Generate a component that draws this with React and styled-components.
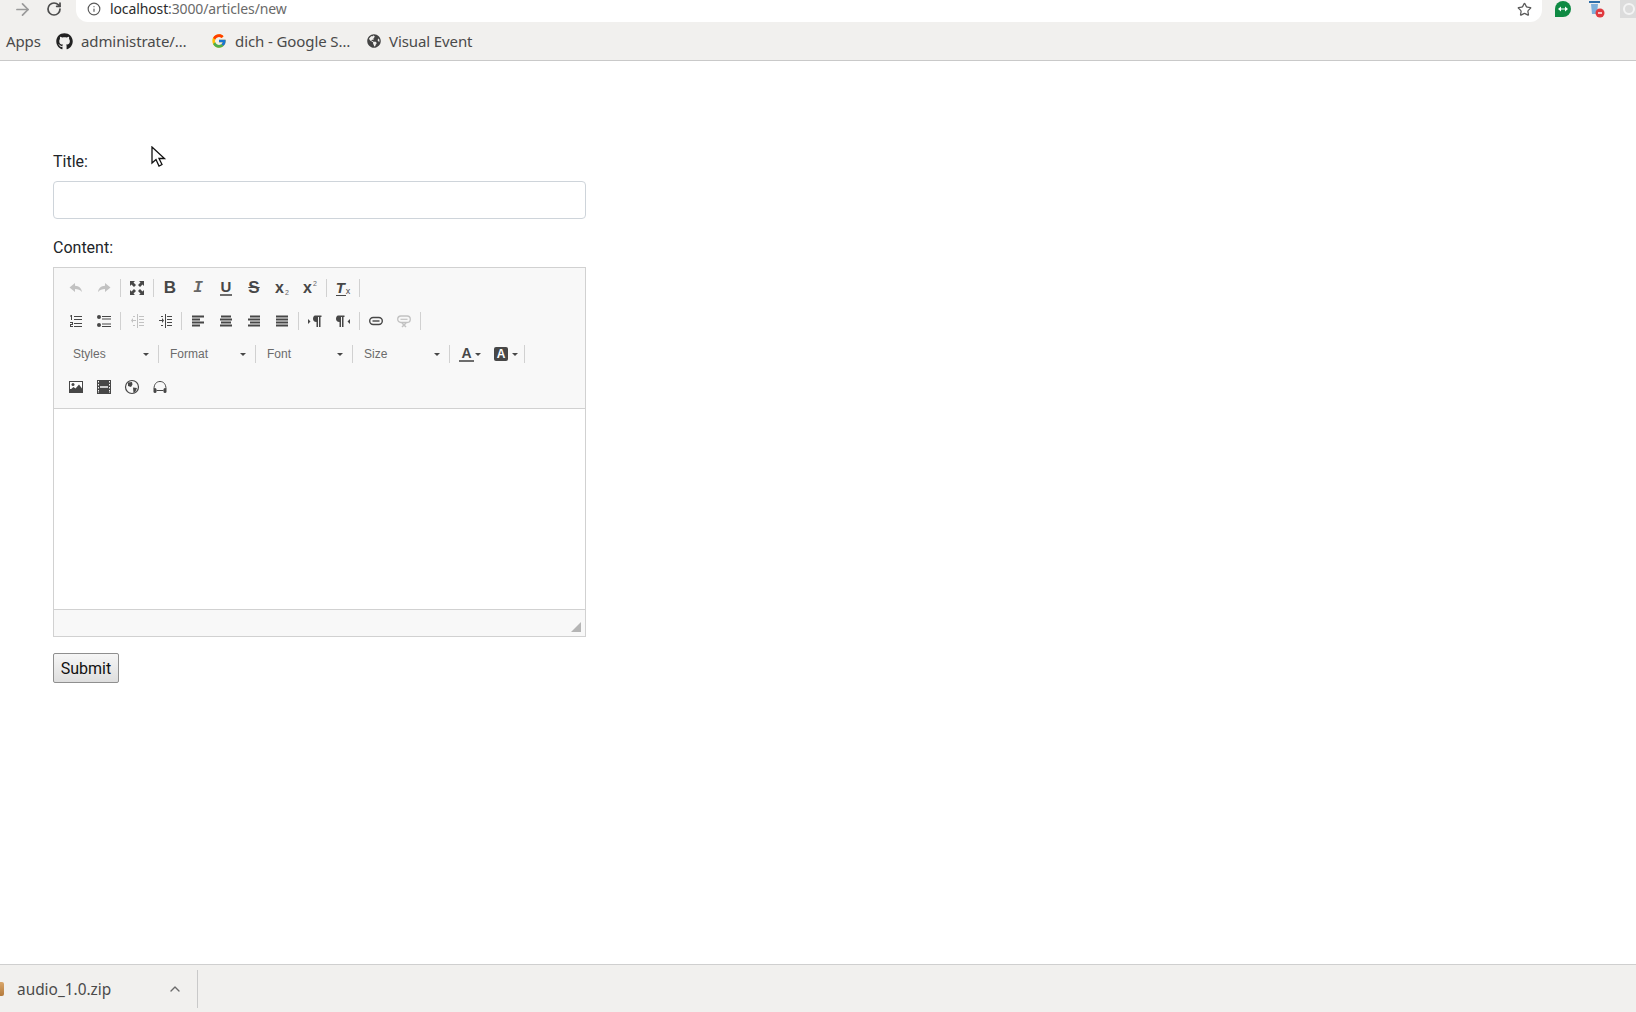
import React from 'react';
import styled, { createGlobalStyle } from 'styled-components';
import { FaGithub, FaGlobeAmericas } from 'react-icons/fa';
import { FcGoogle } from 'react-icons/fc';
import { ArrowRight, RotateCw, Info, Star, ChevronUp } from 'lucide-react';

const GlobalStyle = createGlobalStyle`
  html, body {
    margin: 0;
    padding: 0;
    background: #ffffff;
    overflow: hidden;
  }
  * {
    box-sizing: border-box;
  }
`;

const Page = styled.div`
  position: relative;
  width: 1636px;
  height: 1012px;
  display: flex;
  flex-direction: column;
  font-family: Roboto, sans-serif;
  color: #212529;
  overflow: hidden;
`;

const ChromeBar = styled.header`
  height: 61px;
  flex: none;
  background: #f1f0ee;
  border-bottom: 1px solid #c9c9c9;
  font-family: 'Noto Sans', sans-serif;
`;

const NavRow = styled.div`
  height: 22px;
  display: flex;
  align-items: flex-start;
`;

const NavIcon = styled.div`
  width: ${p => p.$w}px;
  height: 18px;
  flex: none;
  display: flex;
  align-items: center;
  justify-content: center;
  color: ${p => p.$color};
`;

const BackIcon = styled(NavIcon)`
  padding-left: 6px;
`;

const AddressBar = styled.div`
  width: 1466px;
  height: 22px;
  margin-left: 6px;
  flex: none;
  background: #ffffff;
  border-radius: 0 0 12px 12px;
  display: flex;
  align-items: flex-start;
  padding: 0 10px 0 10px;
`;

const Url = styled.div`
  flex: 1;
  margin-left: 8px;
  font-size: 14px;
  line-height: 18px;
  color: #6a6a6a;
  letter-spacing: -0.12px;

  b {
    font-weight: 400;
    color: #2b2b2b;
  }
`;

const Extensions = styled.div`
  display: flex;
  align-items: flex-start;
  padding-left: 12px;
  gap: 15px;
`;

const BookmarkRow = styled.div`
  height: 38px;
  display: flex;
  align-items: center;
  padding: 0 0 0 6px;
  font-size: 15px;
  color: #4a4a4a;
`;

const Bookmark = styled.div`
  width: ${p => p.$w}px;
  flex: none;
  display: flex;
  align-items: center;
  gap: 8px;
  white-space: nowrap;
  letter-spacing: -0.1px;
`;

const Main = styled.main`
  flex: 1;
  padding: 88px 0 0 53px;
`;

const Form = styled.form`
  width: 533px;
`;

const FormGroup = styled.div`
  margin-bottom: 16px;
`;

const Label = styled.label`
  display: block;
  font-size: 16px;
  line-height: 24px;
  padding-top: 1px;
  margin-bottom: 7px;
`;

const TextInput = styled.input`
  display: block;
  width: 100%;
  height: 38px;
  border: 1px solid #ced4da;
  border-radius: 4px;
  background: #ffffff;
  outline: none;
`;

const Editor = styled.div`
  height: 370px;
  border: 1px solid #d1d1d1;
  display: flex;
  flex-direction: column;
`;

const Toolbar = styled.div`
  height: 141px;
  flex: none;
  background: #f8f8f8;
  border-bottom: 1px solid #d1d1d1;
  padding: 6px 0 0 8px;
`;

const ToolRow = styled.div`
  height: 28px;
  margin-bottom: 5px;
  display: flex;
  align-items: center;
`;

const ToolButton = styled.div`
  width: 28px;
  height: 28px;
  flex: none;
  display: flex;
  align-items: center;
  justify-content: center;
  color: ${p => (p.$off ? '#c2c2c2' : '#474747')};
`;

const Sep = styled.span`
  width: 1px;
  height: 18px;
  flex: none;
  margin: 0 2px;
  background: #d1d1d1;
`;

const Combo = styled.div`
  width: 94px;
  height: 28px;
  flex: none;
  padding: 0 7px 0 11px;
  display: flex;
  align-items: center;
  justify-content: space-between;
  font-family: 'Liberation Sans', sans-serif;
  font-size: 12px;
  color: #6b6b6b;
`;

const ComboSep = styled(Sep)`
  margin: 0 0 0 2px;
`;

const Caret = styled.i`
  display: block;
  width: 0;
  height: 0;
  border-left: 3px solid transparent;
  border-right: 3px solid transparent;
  border-top: 3px solid #474747;
`;

const ColorButton = styled.div`
  width: ${p => p.$w}px;
  height: 28px;
  flex: none;
  padding-left: ${p => p.$pad}px;
  display: flex;
  align-items: center;
  gap: ${p => p.$gap}px;
`;

const Letter = styled.span`
  display: flex;
  align-items: flex-end;
  font-family: ${p => (p.$mono ? "'Liberation Mono'" : "'Liberation Sans'")}, sans-serif;
  font-size: ${p => p.$size || 16}px;
  line-height: 16px;
  font-weight: 700;
  font-style: ${p => (p.$italic ? 'italic' : 'normal')};
  color: ${p => (p.$mono ? '#666666' : '#474747')};
  text-decoration: ${p => p.$line || 'none'};

  small {
    font-size: 7px;
    line-height: 7px;
    font-weight: 400;
    color: #666666;
    margin-left: 1px;
    align-self: ${p => (p.$up ? 'flex-start' : 'flex-end')};
  }
`;

const UnderLetter = styled(Letter)`
  border-bottom: 2px solid #6d6d6d;
  line-height: 14px;
  height: 16px;
  width: ${p => p.$w || 12}px;
  justify-content: center;
`;

const ClearFormat = styled.span`
  display: flex;
  align-items: flex-end;
  font-family: 'Liberation Sans', sans-serif;
  font-weight: 700;
  color: #474747;

  u {
    display: block;
    height: 15px;
    width: 10px;
    font-size: 15px;
    font-style: italic;
    line-height: 13px;
    text-decoration: none;
    border-bottom: 1.5px solid #474747;
  }

  small {
    font-size: 9px;
    line-height: 9px;
    font-weight: 400;
  }
`;

const InverseLetter = styled(Letter)`
  width: 14px;
  height: 14px;
  border-radius: 2px;
  align-items: center;
  justify-content: center;
  background: #474747;
  color: #ffffff;
  font-size: 12px;
`;

const Body = styled.div`
  flex: 1;
  background: #ffffff;
`;

const StatusBar = styled.div`
  height: 27px;
  flex: none;
  background: #f8f8f8;
  border-top: 1px solid #d1d1d1;
  display: flex;
  justify-content: flex-end;
  align-items: flex-end;
  padding: 0 4px 4px 0;
`;

const Submit = styled.button`
  display: block;
  width: 66px;
  height: 30px;
  padding: 0;
  font-family: inherit;
  font-size: 16px;
  color: #111111;
  background: linear-gradient(#f6f6f6, #dedede);
  border: 1px solid #8f8f8f;
  border-radius: 2px;
`;

const DownloadBar = styled.footer`
  height: 48px;
  flex: none;
  background: #f1f0ee;
  border-top: 1px solid #cfcfcf;
  display: flex;
  align-items: center;
  font-family: 'Noto Sans', sans-serif;
`;

const FileIcon = styled.span`
  width: 4px;
  height: 14px;
  flex: none;
  background: linear-gradient(#d9a66a, #b47a3c);
  border-radius: 0 2px 2px 0;
`;

const FileName = styled.span`
  width: 150px;
  flex: none;
  margin-left: 13px;
  padding-top: 2px;
  font-size: 15.4px;
  color: #4a4a4a;
`;

const DownloadSep = styled.span`
  width: 1px;
  height: 38px;
  margin-left: 14px;
  background: #c9c9c9;
`;

const Cursor = styled.svg`
  position: absolute;
  left: 151px;
  top: 146px;
`;

const Glyph = ({ children }) => (
  <svg width="16" height="16" viewBox="0 0 16 16" fill="currentColor">
    {children}
  </svg>
);

const Bars = ({ rows }) => (
  <Glyph>
    {rows.map(([x, w], i) => (
      <rect key={i} x={x} y={2.5 + i * 3} width={w} height="2" />
    ))}
  </Glyph>
);

const IconUndo = () => (
  <Glyph>
    <path d="M7 3 1.500 7.500 7 12V9c3 0 5 .8 7 3-.4-3.600-3-6-7-6.200z" />
  </Glyph>
);

const IconRedo = () => (
  <Glyph>
    <path d="M9 3l5.500 4.500L9 12V9c-3 0-5 .8-7 3 .4-3.600 3-6 7-6.200z" />
  </Glyph>
);

const IconMaximize = () => (
  <Glyph>
    <path d="M1 1h5L4.500 2.500 7 5 5 7 2.500 4.500 1 6zM15 1v5l-1.500-1.500L11 7 9 5l2.500-2.500L10 1zM1 15v-5l1.500 1.500L5 9l2 2-2.500 2.500L6 15zM15 15h-5l1.500-1.500L9 11l2-2 2.500 2.500L15 10z" />
  </Glyph>
);

const IconOrdered = () => (
  <Glyph>
    <rect x="6" y="3" width="8" height="1" />
    <rect x="6" y="6" width="8" height="1" />
    <rect x="6" y="10" width="8" height="1" />
    <rect x="6" y="13" width="8" height="1" />
    <path d="M3 2h1v5H3V3.500H2V3zM2 9h3v3H3v1h2v1H2v-3h2v-1H2z" />
  </Glyph>
);

const IconBulleted = () => (
  <Glyph>
    <circle cx="3" cy="4" r="2" />
    <circle cx="3" cy="12" r="2" />
    <rect x="6" y="3" width="9" height="1" />
    <rect x="6" y="5.500" width="9" height="1" />
    <rect x="6" y="10.500" width="9" height="1" />
    <rect x="6" y="13" width="9" height="1" />
  </Glyph>
);

const IconIndent = () => (
  <Glyph>
    <rect x="8" y="1" width="1" height="14" />
    <rect x="10" y="3" width="5" height="1" />
    <rect x="10" y="6" width="5" height="1" />
    <rect x="10" y="9" width="5" height="1" />
    <rect x="10" y="12" width="5" height="1" />
    <path d="M2 7h3V5l2 2.500L5 10V8H2z" />
    <rect x="4" y="3" width="2" height="1" />
    <rect x="4" y="12" width="2" height="1" />
  </Glyph>
);

const IconOutdent = () => (
  <Glyph>
    <rect x="8" y="1" width="1" height="14" />
    <rect x="10" y="3" width="5" height="1" />
    <rect x="10" y="6" width="5" height="1" />
    <rect x="10" y="9" width="5" height="1" />
    <rect x="10" y="12" width="5" height="1" />
    <path d="M7 7H4V5L2 7.500 4 10V8h3z" />
    <rect x="4" y="3" width="2" height="1" />
    <rect x="4" y="12" width="2" height="1" />
  </Glyph>
);

const IconPilcrowLtr = () => (
  <Glyph>
    <path d="M1 6l2.500 2.500L1 11z" />
    <path d="M8 2.500h6.500V4h-1v10H12V4h-1v10H9.500V9C7 9 6 7.500 6 5.800S7 2.500 8 2.500z" />
  </Glyph>
);

const IconPilcrowRtl = () => (
  <Glyph>
    <path d="M15 6l-2.500 2.500L15 11z" />
    <path d="M3 2.500h6.500V4h-1v10H7V4H6v10H4.500V9C2 9 1 7.500 1 5.800S2 2.500 3 2.500z" />
  </Glyph>
);

const IconLink = () => (
  <Glyph>
    <rect x="1.700" y="4.500" width="12.600" height="7" rx="3.500" fill="none" stroke="currentColor" strokeWidth="1.400" />
    <rect x="4.500" y="7.300" width="7" height="1.400" />
  </Glyph>
);

const IconUnlink = () => (
  <Glyph>
    <rect x="1.700" y="3" width="12.600" height="6.500" rx="3.200" fill="none" stroke="currentColor" strokeWidth="1.300" />
    <rect x="4.500" y="5.700" width="7" height="1.200" />
    <path d="M6 10l4 4m0-4l-4 4" fill="none" stroke="currentColor" strokeWidth="1.500" />
  </Glyph>
);

const IconImage = () => (
  <Glyph>
    <rect x="1" y="2" width="14" height="12" />
    <rect x="2" y="3" width="12" height="7" fill="#ffffff" />
    <circle cx="5" cy="5.500" r="1.500" />
    <path d="M2 11l3.500-3 2 1.500L11 5.500l3 4V11z" />
  </Glyph>
);

const IconFlash = () => (
  <Glyph>
    <path d="M1 1h14v14H1zM2 2v1.500h1V2zm0 3v1.500h1V5zm0 3v1.500h1V8zm0 3v1.500h1V11zm0 2.500V14h1v-.5zM13 2v1.500h1V2zm0 3v1.500h1V5zm0 3v1.500h1V8zm0 3v1.500h1V11zm0 2.500V14h1v-.5zM4 7.300v1.400h8V7.300z" fillRule="evenodd" />
  </Glyph>
);

const IconFrame = () => (
  <Glyph>
    <circle cx="8" cy="8" r="6.500" fill="none" stroke="currentColor" strokeWidth="1.200" />
    <path d="M4 3.500l4-.5 .5 2.500L7 8 4 7zM9 8.500l4 .5-1.500 3.500L9.500 14z" />
  </Glyph>
);

const IconAudio = () => (
  <Glyph>
    <path d="M2 10C2 5 4.500 2.500 8 2.500S14 5 14 10" fill="none" stroke="currentColor" />
    <rect x="1.500" y="9" width="3" height="5" rx="1.500" />
    <rect x="11.500" y="9" width="3" height="5" rx="1.500" />
    <rect x="4.500" y="11" width="7" height="1" />
  </Glyph>
);

function ExtensionIcons() {
  return (
    <Extensions>
      <svg width="18" height="18" viewBox="0 0 18 18">
        <path d="M9 1a8 8 0 1 1 0 16H1V9a8 8 0 0 1 8-8z" fill="#0f8a43" />
        <path d="M4 9l3-2.500v2h4v-2L14 9l-3 2.500v-2H7v2z" fill="#ffffff" />
      </svg>
      <svg width="18" height="18" viewBox="0 0 18 18">
        <rect x="2" y="1" width="11" height="2" fill="#2d6ea8" />
        <path d="M4 4h7l-1 10H5z" fill="#7fb0da" />
        <circle cx="13" cy="13" r="4.500" fill="#e0393e" />
        <rect x="11" y="12.300" width="4" height="1.400" fill="#ffffff" />
      </svg>
      <svg width="18" height="18" viewBox="0 0 18 18">
        <rect width="18" height="18" fill="#dcdcdc" />
        <circle cx="9" cy="9" r="5" fill="none" stroke="#f4f4f4" strokeWidth="2" />
      </svg>
    </Extensions>
  );
}

function Chrome() {
  return (
    <ChromeBar>
      <NavRow>
        <BackIcon $w={38} $color="#9a9a9a">
          <ArrowRight size={19} strokeWidth={2.2} />
        </BackIcon>
        <NavIcon $w={32} $color="#4c4c4c">
          <RotateCw size={16} strokeWidth={2.6} />
        </NavIcon>
        <AddressBar>
          <NavIcon $w={16} $color="#5a5a5a">
            <Info size={14} />
          </NavIcon>
          <Url>
            <b>localhost</b>:3000/articles/new
          </Url>
          <NavIcon $w={16} $color="#5a5a5a">
            <Star size={15} />
          </NavIcon>
        </AddressBar>
        <ExtensionIcons />
      </NavRow>
      <BookmarkRow>
        <Bookmark $w={50}>Apps</Bookmark>
        <Bookmark $w={155}>
          <FaGithub size={17} color="#222222" />
          administrate/…
        </Bookmark>
        <Bookmark $w={156}>
          <FcGoogle size={16} />
          dich - Google S…
        </Bookmark>
        <Bookmark $w={120}>
          <FaGlobeAmericas size={14} color="#444444" />
          Visual Event
        </Bookmark>
      </BookmarkRow>
    </ChromeBar>
  );
}

function EditorToolbar() {
  return (
    <Toolbar>
      <ToolRow>
        <ToolButton $off><IconUndo /></ToolButton>
        <ToolButton $off><IconRedo /></ToolButton>
        <Sep />
        <ToolButton><IconMaximize /></ToolButton>
        <Sep />
        <ToolButton><Letter $size={17}>B</Letter></ToolButton>
        <ToolButton><Letter $mono $italic $size={16}>I</Letter></ToolButton>
        <ToolButton><UnderLetter $size={15}>U</UnderLetter></ToolButton>
        <ToolButton><Letter $size={17} $line="line-through">S</Letter></ToolButton>
        <ToolButton><Letter>x<small>2</small></Letter></ToolButton>
        <ToolButton><Letter $up>x<small>2</small></Letter></ToolButton>
        <Sep />
        <ToolButton><ClearFormat><u>T</u><small>x</small></ClearFormat></ToolButton>
        <Sep />
      </ToolRow>
      <ToolRow>
        <ToolButton><IconOrdered /></ToolButton>
        <ToolButton><IconBulleted /></ToolButton>
        <Sep />
        <ToolButton $off><IconOutdent /></ToolButton>
        <ToolButton><IconIndent /></ToolButton>
        <Sep />
        <ToolButton><Bars rows={[[2, 12], [2, 8], [2, 12], [2, 8]]} /></ToolButton>
        <ToolButton><Bars rows={[[3, 10], [2, 12], [3, 10], [2, 12]]} /></ToolButton>
        <ToolButton><Bars rows={[[4, 10], [2, 12], [4, 10], [2, 12]]} /></ToolButton>
        <ToolButton><Bars rows={[[2, 12], [2, 12], [2, 12], [2, 12]]} /></ToolButton>
        <Sep />
        <ToolButton><IconPilcrowLtr /></ToolButton>
        <ToolButton><IconPilcrowRtl /></ToolButton>
        <Sep />
        <ToolButton><IconLink /></ToolButton>
        <ToolButton $off><IconUnlink /></ToolButton>
        <Sep />
      </ToolRow>
      <ToolRow>
        {['Styles', 'Format', 'Font', 'Size'].map(name => (
          <React.Fragment key={name}>
            <Combo>
              {name}
              <Caret />
            </Combo>
            <ComboSep />
          </React.Fragment>
        ))}
        <ColorButton $w={37} $pad={9} $gap={1}>
          <UnderLetter $size={14} $w={15}>A</UnderLetter>
          <Caret />
        </ColorButton>
        <ColorButton $w={35} $pad={7} $gap={4}>
          <InverseLetter>A</InverseLetter>
          <Caret />
        </ColorButton>
        <Sep />
      </ToolRow>
      <ToolRow>
        <ToolButton><IconImage /></ToolButton>
        <ToolButton><IconFlash /></ToolButton>
        <ToolButton><IconFrame /></ToolButton>
        <ToolButton><IconAudio /></ToolButton>
      </ToolRow>
    </Toolbar>
  );
}

export default function App() {
  return (
    <Page>
      <GlobalStyle />
      <Chrome />
      <Main>
        <Form onSubmit={e => e.preventDefault()}>
          <FormGroup>
            <Label htmlFor="title">Title:</Label>
            <TextInput id="title" type="text" />
          </FormGroup>
          <FormGroup>
            <Label>Content:</Label>
            <Editor>
              <EditorToolbar />
              <Body />
              <StatusBar>
                <svg width="10" height="10" viewBox="0 0 10 10">
                  <path d="M10 0v10H0z" fill="#b5b5b5" />
                </svg>
              </StatusBar>
            </Editor>
          </FormGroup>
          <Submit type="submit">Submit</Submit>
        </Form>
      </Main>
      <DownloadBar>
        <FileIcon />
        <FileName>audio_1.0.zip</FileName>
        <ChevronUp size={16} color="#6a6a6a" />
        <DownloadSep />
      </DownloadBar>
      <Cursor width="16" height="22" viewBox="0 0 16 22">
        <path d="M1 1v16l4-3.500 3 6.500 3-1.500-3-6h5.500z" fill="#ffffff" stroke="#111111" strokeWidth="1.300" />
      </Cursor>
    </Page>
  );
}
